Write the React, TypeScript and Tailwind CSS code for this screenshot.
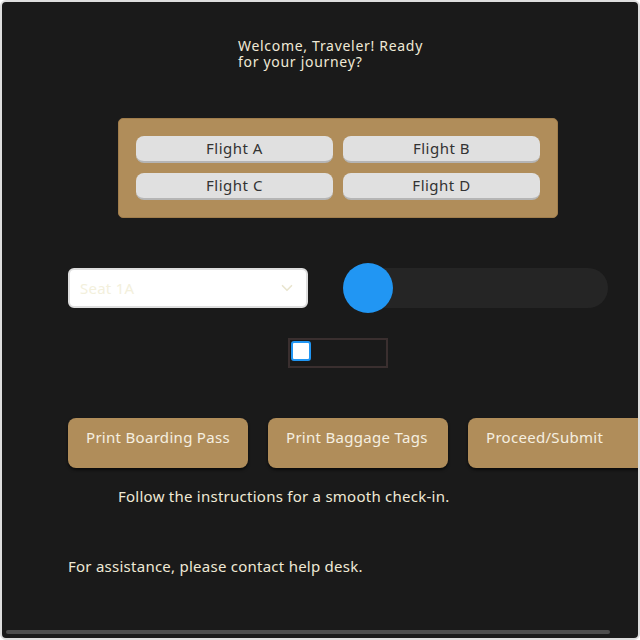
import { ChevronDown } from 'lucide-react'

const font = { fontFamily: '"Noto Sans", "DejaVu Sans", sans-serif' }

function FlightButton({ label }: { label: string }) {
  return (
    <button className="h-[27px] rounded-[8px] bg-[#e0e0e0] border-b-2 border-[#b5b5b5] text-[15px] leading-none tracking-[0.5px] text-[#333333]">
      {label}
    </button>
  )
}

function ActionButton({ label }: { label: string }) {
  return (
    <button className="w-[180px] h-[50px] shrink-0 rounded-[8px] bg-[#b08d5a] px-[18px] pt-[9px] text-left whitespace-nowrap text-[15px] leading-[20px] tracking-[0.3px] text-[#f5efe0] shadow-[0_2px_3px_rgba(0,0,0,0.6)] flex items-start">
      {label}
    </button>
  )
}

export default function App() {
  return (
    <div style={font} className="relative w-[640px] h-[640px] overflow-hidden rounded-[6px] border-2 border-[#dedede] bg-[#1a1a1a] tracking-[0.25px]">
      <div className="flex flex-col pt-[36px]">
        <h1 className="ml-[236px] w-[196px] text-[14px] leading-[16px] font-normal tracking-[0.7px] text-[#efe9d6]">
          Welcome, Traveler! Ready for your journey?
        </h1>

        <div className="ml-[116px] mt-[48px] w-[440px] rounded-[5px] border border-[#a07d4c] bg-[#b08d5a] p-[17px] grid grid-cols-2 gap-[10px]">
          <FlightButton label="Flight A" />
          <FlightButton label="Flight B" />
          <FlightButton label="Flight C" />
          <FlightButton label="Flight D" />
        </div>

        <div className="mt-[50px] ml-[66px] flex items-center gap-[35px]">
          <div className="w-[240px] h-[40px] rounded-[6px] border-2 border-[#dedede] bg-white flex items-center justify-between pl-[10px] pr-[10px]">
            <span className="text-[15px] text-[#f3f0dc]">Seat 1A</span>
            <ChevronDown className="w-[18px] h-[18px] text-[#e9e5cf]" strokeWidth={2.2} />
          </div>
          <div className="relative w-[265px] h-[40px] rounded-full bg-[#252525]">
            <div className="absolute left-0 top-[-5px] w-[50px] h-[50px] rounded-full bg-[#2196f3]" />
          </div>
        </div>

        <div className="mt-[30px] ml-[286px] w-[100px] h-[30px] border-2 border-[#3a2f2f] p-[1px]">
          <div className="w-[20px] h-[20px] rounded-[3px] border-2 border-[#2196f3] bg-white" />
        </div>

        <div className="mt-[50px] ml-[66px] flex gap-[20px]">
          <ActionButton label="Print Boarding Pass" />
          <ActionButton label="Print Baggage Tags" />
          <ActionButton label="Proceed/Submit" />
        </div>

        <p className="mt-[20px] ml-[116px] text-[15px] leading-[16px] text-[#efe9d6]">
          Follow the instructions for a smooth check-in.
        </p>

        <p className="mt-[54px] ml-[66px] text-[15px] leading-[16px] text-[#efe9d6]">
          For assistance, please contact help desk.
        </p>
      </div>

      <div className="absolute left-[4px] bottom-[4px] w-[604px] h-[4px] rounded-full bg-[#4d4d4d]" />
    </div>
  )
}
